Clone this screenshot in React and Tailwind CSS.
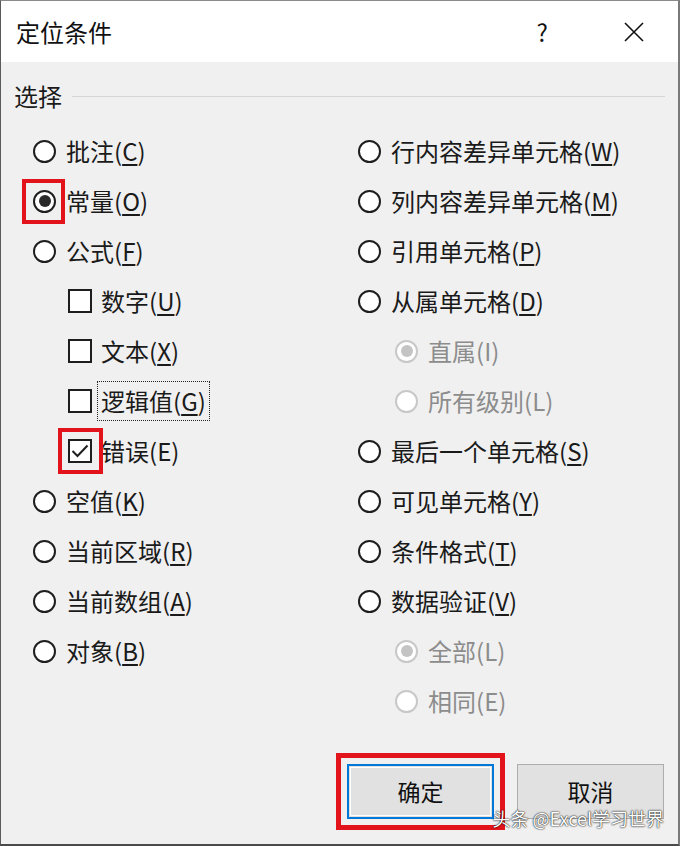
import React from 'react';
import clsx from 'clsx';

const FONT = { fontFamily: '"Noto Sans CJK SC", "Noto Sans", sans-serif' };

const leftItems = [
  { type: 'radio', text: '批注', k: 'C' },
  { type: 'radio', text: '常量', k: 'O', checked: true, mark: true },
  { type: 'radio', text: '公式', k: 'F' },
  { type: 'check', text: '数字', k: 'U', indent: true },
  { type: 'check', text: '文本', k: 'X', indent: true },
  { type: 'check', text: '逻辑值', k: 'G', indent: true, focus: true },
  { type: 'check', text: '错误', k: 'E', indent: true, checked: true, mark: true, plain: true },
  { type: 'radio', text: '空值', k: 'K' },
  { type: 'radio', text: '当前区域', k: 'R' },
  { type: 'radio', text: '当前数组', k: 'A' },
  { type: 'radio', text: '对象', k: 'B' },
];

const rightItems = [
  { type: 'radio', text: '行内容差异单元格', k: 'W' },
  { type: 'radio', text: '列内容差异单元格', k: 'M' },
  { type: 'radio', text: '引用单元格', k: 'P' },
  { type: 'radio', text: '从属单元格', k: 'D' },
  { type: 'radio', text: '直属', k: 'I', indent: true, disabled: true, checked: true },
  { type: 'radio', text: '所有级别', k: 'L', indent: true, disabled: true },
  { type: 'radio', text: '最后一个单元格', k: 'S' },
  { type: 'radio', text: '可见单元格', k: 'Y' },
  { type: 'radio', text: '条件格式', k: 'T' },
  { type: 'radio', text: '数据验证', k: 'V' },
  { type: 'radio', text: '全部', k: 'L', indent: true, disabled: true, checked: true },
  { type: 'radio', text: '相同', k: 'E', indent: true, disabled: true },
];

const Radio = ({ checked, disabled }) => (
  <span
    className={clsx(
      'flex h-[23px] w-[23px] shrink-0 items-center justify-center rounded-full border-2 bg-white',
      disabled ? 'border-[#c8c8c8]' : 'border-[#1e1e1e]'
    )}
  >
    {checked && (
      <span className={clsx('h-[12px] w-[12px] rounded-full', disabled ? 'bg-[#c4c4c4]' : 'bg-[#2a2a2a]')} />
    )}
  </span>
);

const Check = ({ checked }) => (
  <span className="flex h-[24px] w-[24px] shrink-0 items-center justify-center border-2 border-[#1e1e1e] bg-white">
    {checked && (
      <svg width="18" height="14" viewBox="0 0 18 14" fill="none">
        <path d="M1.5 7 L6.5 12 L16.5 1.5" stroke="#1e1e1e" strokeWidth="2" />
      </svg>
    )}
  </span>
);

const Option = ({ item, sub }) => {
  const label = (
    <span className={clsx('whitespace-nowrap', item.disabled ? 'text-[#8c8c8c]' : 'text-[#1a1a1a]')}>
      {item.text}(
      <span className={item.disabled || item.plain ? '' : 'underline underline-offset-[3px]'}>{item.k}</span>)
    </span>
  );
  return (
    <div className={clsx('flex h-[50px] items-center', item.indent && (sub ? 'pl-[37px]' : 'pl-[35px]'))}>
      <span className="relative flex">
        {item.type === 'radio' ? <Radio checked={item.checked} disabled={item.disabled} /> : <Check checked={item.checked} />}
        {item.mark && (
          <span
            className={clsx(
              'absolute border-[4px] border-[#e3131b]',
              item.type === 'radio' ? '-left-[11px] -top-[11px] h-[45px] w-[43px]' : '-left-[10px] -top-[11px] h-[46px] w-[45px]'
            )}
          />
        )}
      </span>
      <span className={clsx('text-[24px] leading-none', item.type === 'radio' ? 'ml-[10px]' : 'ml-[9px]')}>
        {item.focus ? (
          <span className="inline-flex h-[40px] items-center border border-dotted border-[#222] px-[3px] -ml-[4px]">{label}</span>
        ) : (
          label
        )}
      </span>
    </div>
  );
};

export default function App() {
  return (
    <div
      style={FONT}
      className="relative flex h-[846px] w-[680px] flex-col overflow-hidden border-t border-l border-r-2 border-b-2 border-t-[#8a8a8a] border-l-[#5a5a5a] border-r-[#7a7a7a] border-b-[#4a4a4a] bg-[#f0f0f0]"
    >
      <div className="flex h-[61px] shrink-0 items-center bg-white pl-[15px] pr-[34px]">
        <span className="text-[24px] text-[#111]">定位条件</span>
        <span className="ml-auto text-[24px] text-[#111]">?</span>
        <svg className="ml-[76px]" width="20" height="20" viewBox="0 0 20 20">
          <path d="M1 1 L19 19 M19 1 L1 19" stroke="#111" strokeWidth="1.6" />
        </svg>
      </div>

      <div className="flex h-[64px] shrink-0 items-center pl-[13px] pr-[13px] pt-[4px]">
        <span className="text-[24px] text-[#1a1a1a]">选择</span>
        <span className="ml-[10px] h-px flex-1 bg-[#d6d6d6]" />
      </div>

      <div className="flex">
        <div className="w-[357px] shrink-0 pl-[32px]">
          {leftItems.map((item, i) => (
            <Option key={i} item={item} />
          ))}
        </div>
        <div className="flex-1">
          {rightItems.map((item, i) => (
            <Option key={i} item={item} sub />
          ))}
        </div>
      </div>

      <div className="mt-[27px] flex justify-end gap-[12px] pr-[14px]">
        <div className="border-[5px] border-[#e3131b] p-[6px]">
          <button className="flex h-[55px] w-[147px] items-center justify-center border-2 border-[#0078d7] bg-[#e1e1e1] text-[23px] text-[#111] outline outline-1 -outline-offset-4 outline-white">
            确定
          </button>
        </div>
        <div className="pt-[11px]">
          <button className="flex h-[55px] w-[147px] items-center justify-center border border-[#adadad] bg-[#e1e1e1] text-[23px] text-[#111]">
            取消
          </button>
        </div>
      </div>

      <div className="absolute bottom-[12px] right-[14px] text-[18px] text-white [text-shadow:0_0_2px_rgba(0,0,0,0.9),0_0_1px_rgba(0,0,0,0.9)]">
        头条 @Excel学习世界
      </div>
    </div>
  );
}
